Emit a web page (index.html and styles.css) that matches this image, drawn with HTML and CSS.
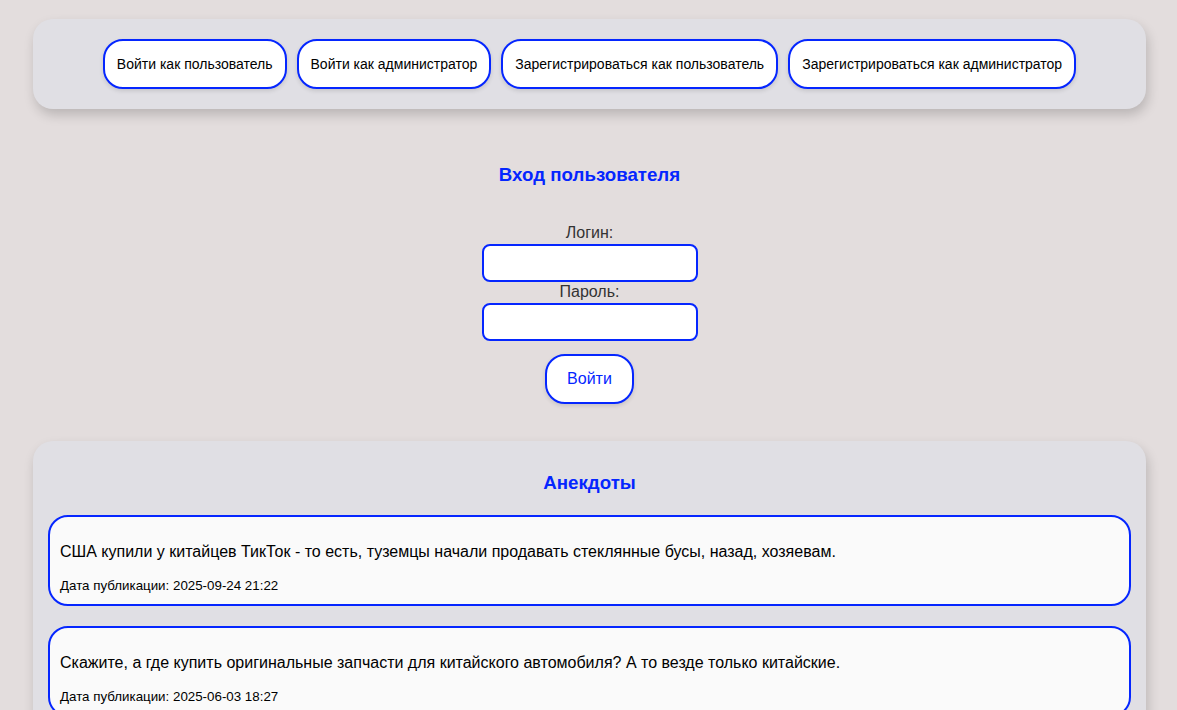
FILE: index.html
```html
<!DOCTYPE html>
<html lang="ru">
<head>
<meta charset="utf-8">
<title>Анекдоты</title>
<link rel="stylesheet" href="styles.css">
</head>
<body>
<header class="panel topbar">
  <button class="btn">Войти как пользователь</button>
  <button class="btn">Войти как администратор</button>
  <button class="btn">Зарегистрироваться как пользователь</button>
  <button class="btn">Зарегистрироваться как администратор</button>
</header>

<section class="login">
  <h2 class="title">Вход пользователя</h2>
  <form class="form">
    <label class="label">Логин:</label>
    <input class="field" type="text">
    <label class="label">Пароль:</label>
    <input class="field" type="password">
    <button class="submit" type="button">Войти</button>
  </form>
</section>

<section class="panel jokes">
  <h2 class="title jokes-title">Анекдоты</h2>
  <div class="card">
    <p class="text">США купили у китайцев ТикТок - то есть, туземцы начали продавать стеклянные бусы, назад, хозяевам.</p>
    <div class="date">Дата публикации: 2025-09-24 21:22</div>
  </div>
  <div class="card">
    <p class="text">Скажите, а где купить оригинальные запчасти для китайского автомобиля? А то везде только китайские.</p>
    <div class="date">Дата публикации: 2025-06-03 18:27</div>
  </div>
</section>
</body>
</html>
```

FILE: styles.css
```css
html, body {
  margin: 0;
  padding: 0;
}
body {
  background: #e3dddd;
  font-family: "Liberation Sans", Arial, sans-serif;
  color: #000;
  padding: 19px 31px 0 33px;
  overflow: hidden;
  height: 710px;
  box-sizing: border-box;
}
.panel {
  background: #e0dfe4;
  border-radius: 20px;
  box-shadow: 2px 6px 12px rgba(0, 0, 0, 0.18);
}
.topbar {
  display: flex;
  justify-content: center;
  gap: 10px;
  padding: 20px;
}
.btn {
  font-family: inherit;
  font-size: 14px;
  line-height: 16px;
  color: #000;
  background: #fff;
  border: 2px solid #0526ff;
  border-radius: 20px;
  padding: 15px 12px;
  box-shadow: 0 2px 4px rgba(0, 0, 0, 0.12);
  cursor: pointer;
}
.login {
  display: flex;
  flex-direction: column;
  align-items: center;
  padding-top: 55px;
  padding-bottom: 37px;
}
.title {
  margin: 0;
  font-size: 18.72px;
  line-height: 22px;
  color: #0526ff;
  font-weight: bold;
  text-align: center;
}
.form {
  display: flex;
  flex-direction: column;
  align-items: center;
  margin-top: 38px;
}
.label {
  font-size: 16px;
  line-height: 18px;
  color: #333;
}
.field {
  width: 216px;
  height: 38px;
  box-sizing: border-box;
  border: 2px solid #0526ff;
  border-radius: 8px;
  background: #fff;
  margin: 2px 0 1px;
  padding: 8px;
  font-size: 16px;
}
.submit {
  margin-top: 12px;
  font-family: inherit;
  font-size: 16px;
  line-height: 18px;
  color: #0526ff;
  background: #fff;
  border: 2px solid #0526ff;
  border-radius: 20px;
  padding: 14px 20px;
  box-shadow: 0 2px 4px rgba(0, 0, 0, 0.12);
  cursor: pointer;
}
.jokes {
  padding: 31px 15px 20px;
  border-bottom-left-radius: 0;
  border-bottom-right-radius: 0;
}
.jokes-title {
  margin-bottom: 21px;
}
.card {
  background: #fafafa;
  border: 2px solid #0526ff;
  border-radius: 20px;
  padding: 10px;
  margin-bottom: 20px;
}
.text {
  margin: 16px 0 17px;
  font-size: 16px;
  line-height: 18px;
}
.date {
  font-size: 13.33px;
  line-height: 15px;
  margin-bottom: 1px;
}
```
